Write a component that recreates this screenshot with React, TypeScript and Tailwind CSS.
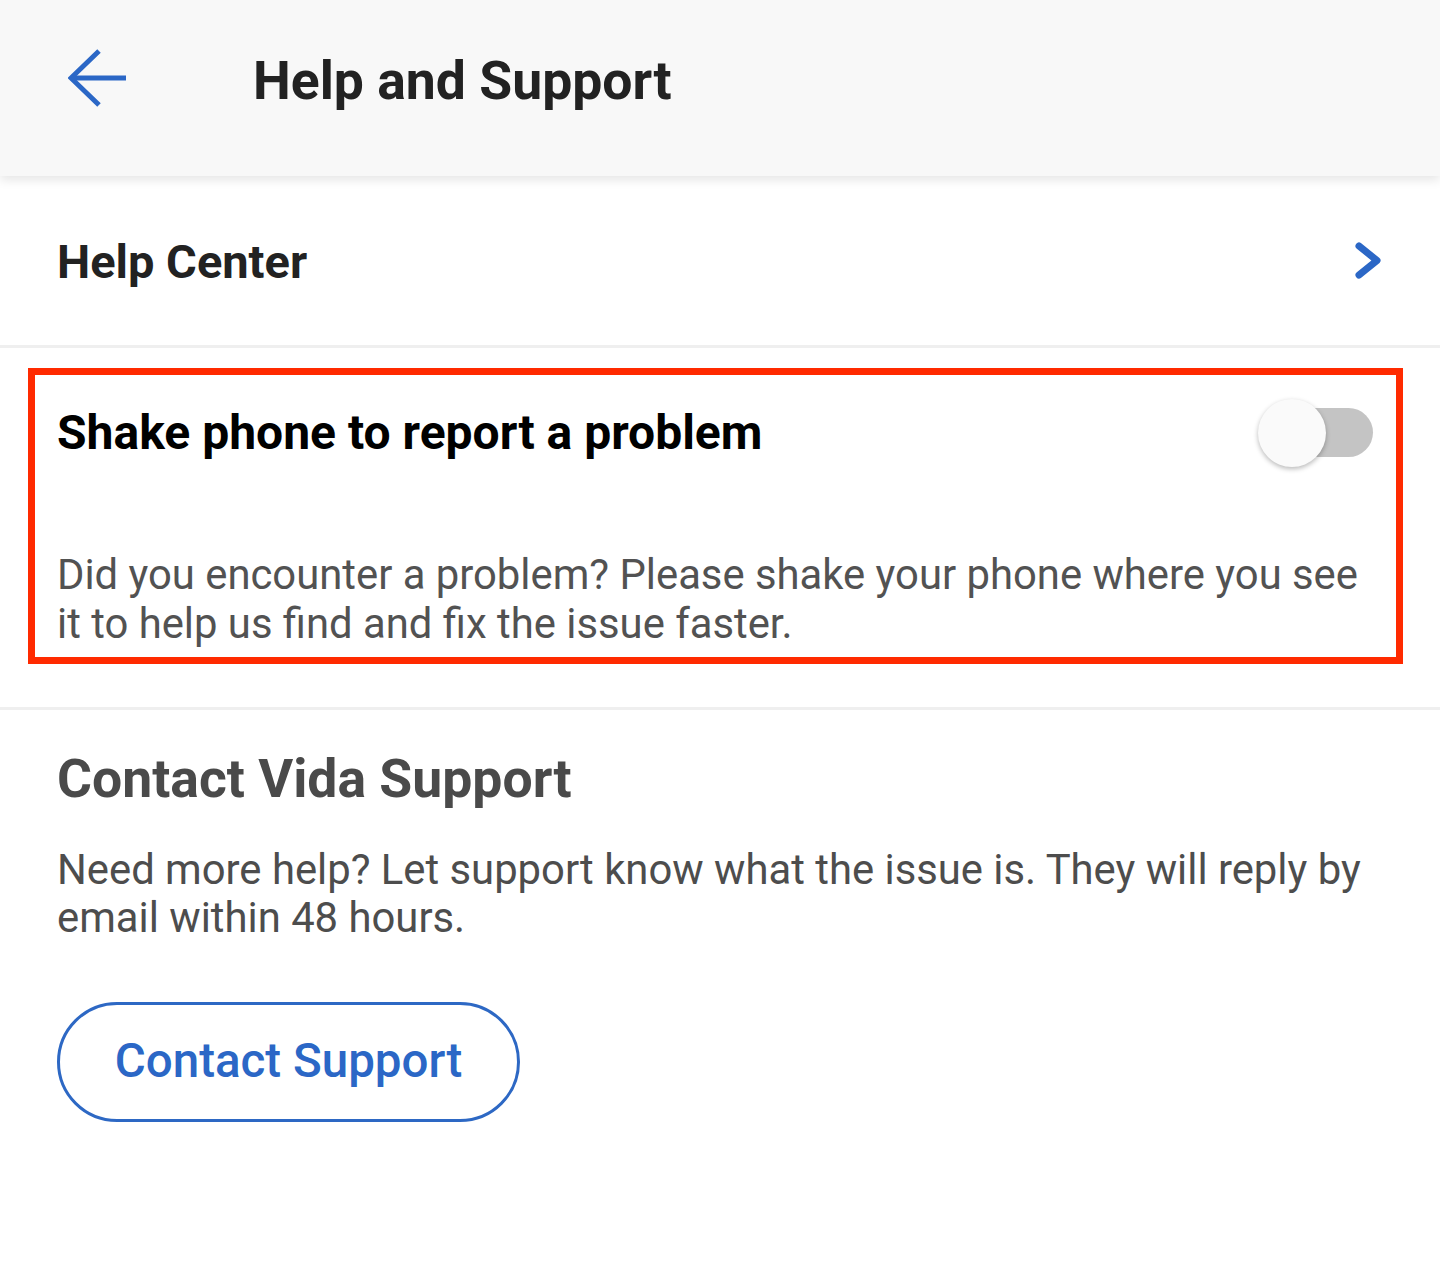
export default function App() {
  return (
    <div className="min-h-screen bg-white font-['Roboto',_'Liberation_Sans',_sans-serif]">
      {/* Top bar */}
      <header className="relative z-10 h-[176px] bg-[#f8f8f8] shadow-[0_4px_10px_rgba(0,0,0,0.10)] flex items-start">
        <svg
          className="ml-[68px] mt-[49px]"
          width="60"
          height="60"
          viewBox="0 0 60 60"
          fill="none"
          stroke="#2b67c6"
          strokeWidth="5"
        >
          <path d="M31 2 L3 29 L31 56" />
          <path d="M3 29 H58" />
        </svg>
        <h1 className="ml-[125px] mt-[54px] text-[53.5px] leading-none font-bold text-[#222222]">
          Help and Support
        </h1>
      </header>

      {/* Help Center row */}
      <div className="h-[169px] flex items-start justify-between pl-[57px] pr-[55px] pt-[62px]">
        <div className="text-[47px] leading-none font-bold text-[#222222]">Help Center</div>
        <svg width="32" height="47" viewBox="0 0 32 47" fill="none" stroke="#2b67c6" strokeWidth="7" strokeLinecap="round" strokeLinejoin="round">
          <path d="M6 8 L24 22.5 L6 37" />
        </svg>
      </div>

      <div className="h-[3px] bg-[#efefef]" />

      {/* Shake to report */}
      <section className="relative pl-[57px] pr-[57px] pt-[51px] pb-[59px]">
        <div className="flex items-center justify-between h-[68px]">
          <div className="text-[48px] leading-none font-bold text-black">Shake phone to report a problem</div>
          <div className="relative w-[115px] h-[68px] mr-[10px]">
            <div className="absolute left-[10px] right-0 top-[9px] h-[49px] rounded-full bg-[#c4c4c4]" />
            <div className="absolute left-0 top-0 w-[68px] h-[68px] rounded-full bg-[#fafafa] shadow-[0_2px_5px_rgba(0,0,0,0.28)]" />
          </div>
        </div>
        <p className="mt-[83px] text-[41.8px] leading-[49px] text-[#525252]">
          Did you encounter a problem? Please shake your phone where you see it to help us find and fix the issue faster.
        </p>
        <div className="absolute left-[28px] right-[37px] top-[20px] bottom-[43px] border-[7px] border-[#ff2a00]" />
      </section>

      <div className="h-[3px] bg-[#efefef]" />

      {/* Contact support */}
      <section className="pl-[57px] pr-[57px] pt-[42px]">
        <h2 className="text-[53.5px] leading-none font-bold text-[#4a4a4a]">Contact Vida Support</h2>
        <p className="mt-[40px] text-[41.8px] leading-[48px] text-[#4d4d4d]">
          Need more help? Let support know what the issue is. They will reply by email within 48 hours.
        </p>
        <button className="mt-[60px] w-[463px] h-[120px] rounded-full border-[3px] border-[#2d68c4] text-[47.5px] font-medium text-[#2b67c6] flex items-center justify-center">
          Contact Support
        </button>
      </section>
    </div>
  )
}
